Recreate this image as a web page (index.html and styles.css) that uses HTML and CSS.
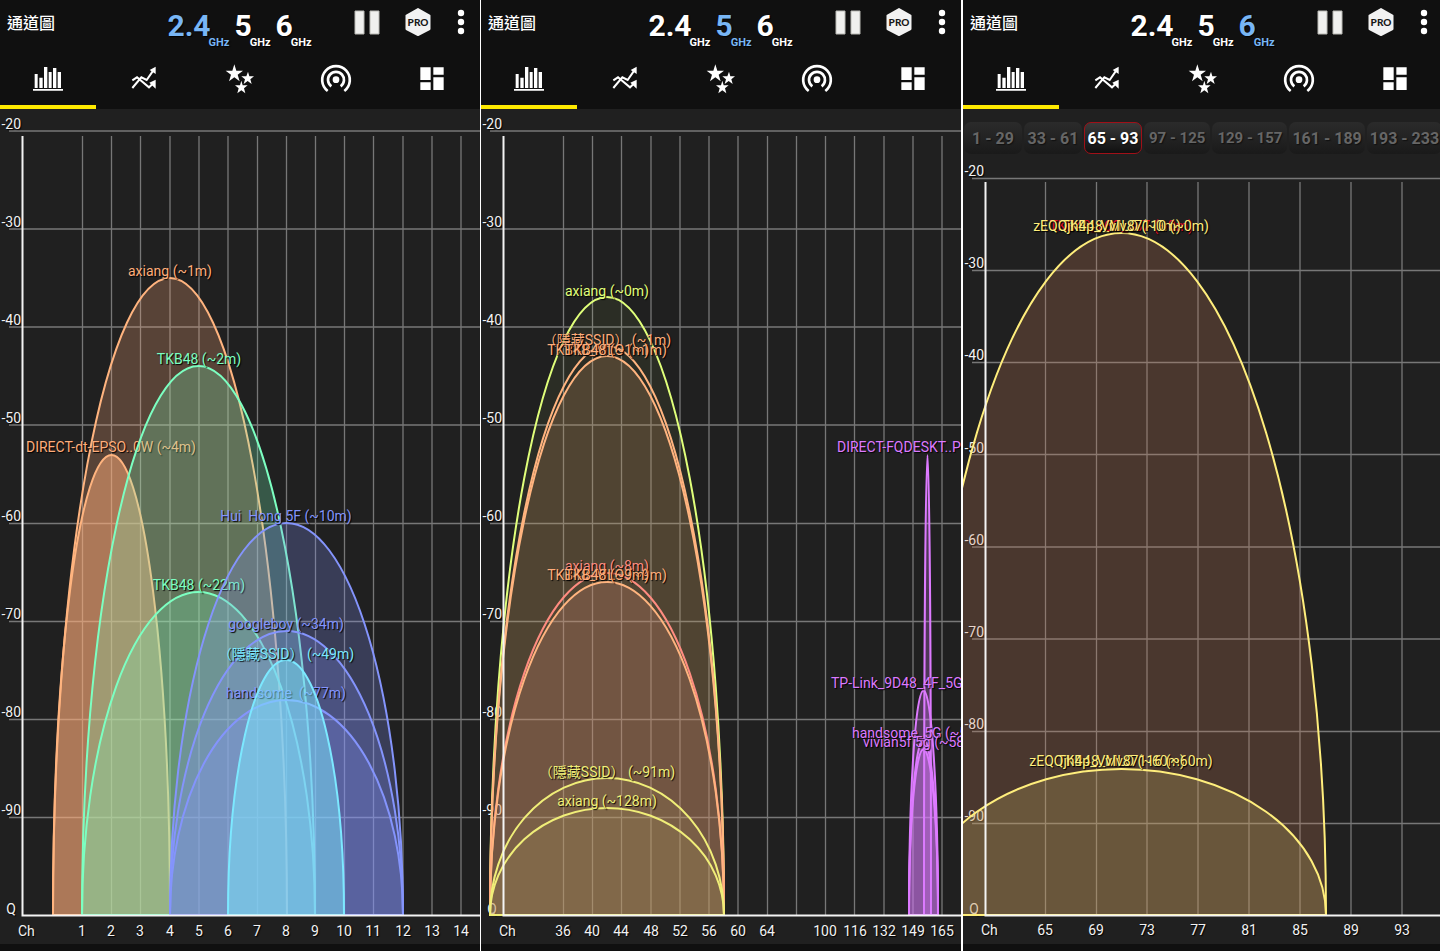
FILE: index.html
```html
<!DOCTYPE html>
<html lang="zh-Hant">
<head>
<meta charset="utf-8">
<title>通道圖</title>
<link rel="stylesheet" href="styles.css">
</head>
<body>
<svg class="defs" aria-hidden="true">
  <symbol id="i-pause" viewBox="0 0 28 28"><path d="M2 3h9v23h-9zM17 3h9v23h-9z" fill="#f0f0ee" stroke="#b9b9b4" stroke-width="1"/></symbol>
  <symbol id="i-pro" viewBox="0 0 28 28"><path d="M14 1 25.500 7.500v13.500L14 27 2.500 21V7.500z" fill="#f2f2f2" stroke="#f2f2f2" stroke-width="2" stroke-linejoin="round"/><text class="pro-text" x="14" y="18" text-anchor="middle">PRO</text></symbol>
  <symbol id="i-more" viewBox="0 0 12 28"><circle cx="6" cy="5" r="3.2"/><circle cx="6" cy="14" r="3.2"/><circle cx="6" cy="23" r="3.2"/></symbol>
  <symbol id="i-bars" viewBox="96 189 96 96"><path d="M104 222h9v42h-9zM118 233h10v31h-10zM132 201h10v63h-10zM146 216h9v48h-9zM159 204h10v60h-10zM173 216h10v48h-10zM99 267h90v5h-90z"/></symbol>
  <symbol id="i-trend" viewBox="384 189 96 96"><path d="M397 264 424 232 440 240 460 211M397 241 411 232 447 262 460 250" fill="none" stroke="#fff" stroke-width="6"/><path d="M467 200 467 222 449 210zM467 239 467 266 448 248z"/></symbol>
  <symbol id="i-stars" viewBox="672 189 96 96"><path d="M703 193 709 212 729 212 713 224 719 244 703 232 687 244 693 224 677 212 697 212z"/><path d="M744 215 748 229 762 229 751 238 755 252 743 243 731 252 735 238 724 229 739 229zM724 242 728 256 743 256 732 265 736 280 724 271 712 280 716 265 705 256 720 256z"/></symbol>
  <symbol id="i-radio" viewBox="960 189 96 96"><circle cx="1008" cy="239" r="10"/><path d="M983 273A41.500 41.500 0 1 1 1033 273M994 259A24 24 0 1 1 1022 259" fill="none" stroke="#fff" stroke-width="8"/></symbol>
  <symbol id="i-dash" viewBox="1248 189 96 96"><path d="M1261 202h31v38h-31zM1300 202h31v22h-31zM1261 247h31v23h-31zM1300 232h31v38h-31z"/></symbol>
</svg>

<main class="screens">
  <section class="screen">
    <div class="device">
      <header class="bar">
        <h1 class="title">通道圖</h1>
        <div class="bands">
          <button class="band is-on"><span class="num">2.4</span><span class="unit">GHz</span></button>
          <button class="band"><span class="num">5</span><span class="unit">GHz</span></button>
          <button class="band"><span class="num">6</span><span class="unit">GHz</span></button>
        </div>
        <div class="tools">
          <button class="tool" aria-label="暫停"><svg><use href="#i-pause"/></svg></button>
          <button class="tool" aria-label="PRO"><svg><use href="#i-pro"/></svg></button>
          <button class="tool more" aria-label="更多"><svg><use href="#i-more"/></svg></button>
        </div>
      </header>
      <nav class="tabs">
        <button class="tab is-on" aria-label="通道圖"><svg><use href="#i-bars"/></svg></button>
        <button class="tab" aria-label="時間圖"><svg><use href="#i-trend"/></svg></button>
        <button class="tab" aria-label="評級"><svg><use href="#i-stars"/></svg></button>
        <button class="tab" aria-label="訊號"><svg><use href="#i-radio"/></svg></button>
        <button class="tab" aria-label="列表"><svg><use href="#i-dash"/></svg></button>
      </nav>
      <svg class="chart" viewBox="0 109 480 835">
        <path class="grid" d="M9 131H480M9 229H480M9 327H480M9 425H480M9 523.500H480M9 621.500H480M9 719.500H480M9 817.500H480M82.500 136V915M111.500 136V915M140.500 136V915M170 136V915M199 136V915M228 136V915M257.500 136V915M286.500 136V915M315.500 136V915M344.500 136V915M373.500 136V915M403 136V915M432 136V915M461 136V915"/>
        <g class="lbl end"><text x="21" y="129">-20</text><text x="21" y="227">-30</text><text x="21" y="325">-40</text><text x="21" y="423">-50</text><text x="21" y="521">-60</text><text x="21" y="619">-70</text><text x="21" y="717">-80</text><text x="21" y="815">-90</text><text x="16" y="914">Q</text></g>
        <g class="lbl"><text x="18" y="936">Ch</text></g>
        <g class="lbl mid"><text x="82" y="936">1</text><text x="111" y="936">2</text><text x="140" y="936">3</text><text x="170" y="936">4</text><text x="199" y="936">5</text><text x="228" y="936">6</text><text x="257" y="936">7</text><text x="286" y="936">8</text><text x="315" y="936">9</text><text x="344" y="936">10</text><text x="373" y="936">11</text><text x="403" y="936">12</text><text x="432" y="936">13</text><text x="461" y="936">14</text></g>
        <g class="net orange"><path d="M53 915A117 637 0 0 1 287 915z"/><text x="170" y="276">axiang (~1m)</text></g>
        <g class="net orange narrow"><path d="M53 915A58.500 460 0 0 1 170 915z"/><text x="111" y="452">DIRECT-dt-EPSO..0W (~4m)</text></g>
        <g class="net green"><path d="M82 915A116.500 549 0 0 1 315 915z"/><text x="199" y="364">TKB48 (~2m)</text></g>
        <g class="net green"><path d="M82 915A116.500 323 0 0 1 315 915z"/><text x="199" y="590">TKB48 (~22m)</text></g>
        <g class="net blue"><path d="M170 915A116.500 392 0 0 1 403 915z"/><text x="286" y="521" xml:space="preserve">Hui  Hong 5F (~10m)</text></g>
        <g class="net blue"><path d="M170 915A116.500 284 0 0 1 403 915z"/><text x="286" y="629">googleboy (~34m)</text></g>
        <g class="net blue"><path d="M170 915A116.500 215 0 0 1 403 915z"/><text x="286" y="698" xml:space="preserve">handsome  (~77m)</text></g>
        <g class="net cyan narrow"><path d="M228 915A58 255 0 0 1 344 915z"/><text x="286" y="659">（隱藏SSID） (~49m)</text></g>
        <path class="axis" d="M22.500 136V915.500H480"/>
      </svg>
    </div>
  </section>

  <section class="screen">
    <div class="device">
      <header class="bar">
        <h1 class="title">通道圖</h1>
        <div class="bands">
          <button class="band"><span class="num">2.4</span><span class="unit">GHz</span></button>
          <button class="band is-on"><span class="num">5</span><span class="unit">GHz</span></button>
          <button class="band"><span class="num">6</span><span class="unit">GHz</span></button>
        </div>
        <div class="tools">
          <button class="tool" aria-label="暫停"><svg><use href="#i-pause"/></svg></button>
          <button class="tool" aria-label="PRO"><svg><use href="#i-pro"/></svg></button>
          <button class="tool more" aria-label="更多"><svg><use href="#i-more"/></svg></button>
        </div>
      </header>
      <nav class="tabs">
        <button class="tab is-on" aria-label="通道圖"><svg><use href="#i-bars"/></svg></button>
        <button class="tab" aria-label="時間圖"><svg><use href="#i-trend"/></svg></button>
        <button class="tab" aria-label="評級"><svg><use href="#i-stars"/></svg></button>
        <button class="tab" aria-label="訊號"><svg><use href="#i-radio"/></svg></button>
        <button class="tab" aria-label="列表"><svg><use href="#i-dash"/></svg></button>
      </nav>
      <svg class="chart" viewBox="481 109 480 835">
        <path class="grid" d="M490 131H961M490 229H961M490 327H961M490 425H961M490 523.500H961M490 621.500H961M490 719.500H961M490 817.500H961M563.500 136V915M592.500 136V915M621.500 136V915M651 136V915M680 136V915M709 136V915M738 136V915M767.500 136V915M796.500 136V915M825.500 136V915M854.500 136V915M884 136V915M913 136V915M942 136V915"/>
        <g class="lbl end"><text x="502" y="129">-20</text><text x="502" y="227">-30</text><text x="502" y="325">-40</text><text x="502" y="423">-50</text><text x="502" y="521">-60</text><text x="502" y="619">-70</text><text x="502" y="717">-80</text><text x="502" y="815">-90</text><text x="497" y="914">Q</text></g>
        <g class="lbl"><text x="499" y="936">Ch</text></g>
        <g class="lbl mid"><text x="563" y="936">36</text><text x="592" y="936">40</text><text x="621" y="936">44</text><text x="651" y="936">48</text><text x="680" y="936">52</text><text x="709" y="936">56</text><text x="738" y="936">60</text><text x="767" y="936">64</text><text x="825" y="936">100</text><text x="855" y="936">116</text><text x="884" y="936">132</text><text x="913" y="936">149</text><text x="942" y="936">165</text></g>
        <g class="net lime"><path d="M490 915A117 618 0 0 1 724 915z"/><text x="607" y="296">axiang (~0m)</text></g>
        <g class="net orange line"><path d="M490 915A117 569 0 0 1 724 915z"/><text x="607" y="345">（隱藏SSID） (~1m)</text></g>
        <g class="net orange"><path class="tan" d="M490 915A117 559 0 0 1 724 915z"/><text x="607" y="355">TKB48_MLO (~1m)</text><text x="607" y="355">TKB48 (~1m)</text></g>
        <g class="net pink line"><path d="M490 915A117 342 0 0 1 724 915z"/><text x="607" y="571">axiang (~8m)</text></g>
        <g class="net orange"><path class="rose" d="M490 915A117 333 0 0 1 724 915z"/><text x="607" y="580">TKB48_MLO (~9m)</text><text x="607" y="580">TKB48 (~9m)</text></g>
        <g class="net yellow half"><path d="M490 915A117 137 0 0 1 724 915z"/><text x="607" y="777">（隱藏SSID） (~91m)</text></g>
        <g class="net yellow half"><path d="M490 915A117 107 0 0 1 724 915z"/><text x="607" y="806">axiang (~128m)</text></g>
        <g class="net purple"><path d="M924 915A3.500 460 0 0 1 931 915z"/><text class="start" x="837" y="452">DIRECT-FQDESKT..PI (~4m)</text></g>
        <g class="net purple"><path d="M909 915A14.500 225 0 0 1 938 915z"/><text class="start" x="831" y="688">TP-Link_9D48_4F_5G (~58m)</text></g>
        <g class="net purple"><path d="M909 915A14.500 176 0 0 1 938 915z"/><text class="start" x="852" y="738">handsome_5G (~58m)</text></g>
        <g class="net purple"><path d="M909 915A14.500 166 0 0 1 938 915z"/><text class="start" x="863" y="747">vivian5f 5g (~58m)</text></g>
        <path class="axis" d="M503.500 136V915.500H961"/>
      </svg>
    </div>
  </section>

  <section class="screen">
    <div class="device cropped">
      <header class="bar">
        <h1 class="title">通道圖</h1>
        <div class="bands">
          <button class="band"><span class="num">2.4</span><span class="unit">GHz</span></button>
          <button class="band"><span class="num">5</span><span class="unit">GHz</span></button>
          <button class="band is-on"><span class="num">6</span><span class="unit">GHz</span></button>
        </div>
        <div class="tools">
          <button class="tool" aria-label="暫停"><svg><use href="#i-pause"/></svg></button>
          <button class="tool" aria-label="PRO"><svg><use href="#i-pro"/></svg></button>
          <button class="tool more" aria-label="更多"><svg><use href="#i-more"/></svg></button>
        </div>
      </header>
      <nav class="tabs">
        <button class="tab is-on" aria-label="通道圖"><svg><use href="#i-bars"/></svg></button>
        <button class="tab" aria-label="時間圖"><svg><use href="#i-trend"/></svg></button>
        <button class="tab" aria-label="評級"><svg><use href="#i-stars"/></svg></button>
        <button class="tab" aria-label="訊號"><svg><use href="#i-radio"/></svg></button>
        <button class="tab" aria-label="列表"><svg><use href="#i-dash"/></svg></button>
      </nav>
      <div class="ranges">
        <button class="range">1 - 29</button>
        <button class="range">33 - 61</button>
        <button class="range is-on">65 - 93</button>
        <button class="range small">97 - 125</button>
        <button class="range small">129 - 157</button>
        <button class="range">161 - 189</button>
        <button class="range">193 - 233</button>
      </div>
      <svg class="chart" viewBox="963 159 480 785">
        <path class="grid" d="M972 178.500H1443M972 270.500H1443M972 362.500H1443M972 454.500H1443M972 547H1443M972 639H1443M972 731.500H1443M972 823.500H1443M1045.500 182V915M1096.500 182V915M1147 182V915M1198 182V915M1249 182V915M1300 182V915M1351 182V915M1402 182V915"/>
        <g class="lbl end"><text x="984" y="176">-20</text><text x="984" y="268">-30</text><text x="984" y="360">-40</text><text x="984" y="453">-50</text><text x="984" y="545">-60</text><text x="984" y="637">-70</text><text x="984" y="729">-80</text><text x="984" y="821">-90</text><text x="979" y="914">Q</text></g>
        <g class="lbl"><text x="981" y="935">Ch</text></g>
        <g class="lbl mid"><text x="1045" y="935">65</text><text x="1096" y="935">69</text><text x="1147" y="935">73</text><text x="1198" y="935">77</text><text x="1249" y="935">81</text><text x="1300" y="935">85</text><text x="1351" y="935">89</text><text x="1402" y="935">93</text></g>
        <g class="net gold"><path class="brown" d="M917 915A204.500 682 0 0 1 1326 915z"/><text class="red" x="1121" y="231">TKB48_v6G_v87 (~0m)</text><text x="1121" y="231">TKB48_MLO (~0m)</text><text x="1121" y="231">zEQQjh4p_VvIv87110 (~0m)</text></g>
        <g class="net gold"><path class="olive" d="M917 915A204.500 146 0 0 1 1326 915z"/><text x="1121" y="766">TKB48_MLO (~60m)</text><text x="1121" y="766">zEQQjh4p_VvIv87116 (~60m)</text></g>
        <path class="axis" d="M985.500 182V915.500H1443"/>
      </svg>
    </div>
  </section>
</main>
</body>
</html>
```
FILE: styles.css
```css
* { box-sizing: border-box; }

body {
  margin: 0;
  background: #101010;
  color: #fff;
  font-family: Roboto, "Noto Sans CJK TC", sans-serif;
}

button {
  margin: 0;
  padding: 0;
  border: 0;
  background: none;
  color: inherit;
  font: inherit;
  cursor: pointer;
}

.defs { position: absolute; width: 0; height: 0; }

.screens {
  display: grid;
  grid-template-columns: 480fr 481fr 479fr;
  min-height: 100vh;
}

.screen { min-width: 0; overflow: hidden; background: #101010; }
.screen + .screen { border-left: 1px solid #fff; }
.screen + .screen + .screen { border-left-width: 2px; }

/* the last screen runs slightly past the right edge */
.cropped { width: calc(100% + 3px); }

.bar {
  display: grid;
  grid-template-columns: 35% 1fr auto;
  height: 49px;
  padding-right: 13px;
}

.title {
  margin: 0;
  padding: 12px 0 0 7px;
  font-size: 16px;
  font-weight: 500;
  line-height: 24px;
}

.bands { display: flex; gap: 5px; align-items: flex-start; padding-left: 4px; }
.band { display: flex; align-items: flex-end; font-weight: 700; text-shadow: 1px 1px 1px #000; }
.num { font-size: 30px; line-height: 32px; padding: 10px 0 8px; }
.unit { margin-left: -2px; font-size: 11px; line-height: 14px; }
.band.is-on { color: #78b6f5; }

.tools { display: flex; gap: 23px; padding-top: 8px; }
.tool { width: 28px; height: 28px; }
.tool.more { width: 12px; }
.tool svg { display: block; width: 100%; height: 100%; fill: #fff; }
.pro-text { font: 900 10px Lato, sans-serif; fill: #181818; }

.tabs { display: grid; grid-template-columns: repeat(5, 1fr); height: 60px; }
.tab { display: grid; justify-items: center; padding-top: 14px; border-bottom: 4px solid transparent; }
.tab.is-on { border-color: #ffea00; }
.tab svg { width: 32px; height: 32px; fill: #fff; }

.ranges {
  display: flex;
  gap: 2px;
  padding: 13px 0 5px 1px;
  background: #202020;
}
.range {
  flex: none;
  min-width: 58px;
  height: 32px;
  padding: 0 2px;
  border: 1px solid transparent;
  border-radius: 7px;
  background: linear-gradient(#2b2b2b, #1a1a1a) border-box;
  color: #666;
  font-size: 16px;
  font-weight: 700;
  text-shadow: 1px 1px 1px #111;
  white-space: nowrap;
}
.range.small { padding: 0 4px; font-size: 15px; }
.range.is-on {
  border-color: #a01018;
  background: linear-gradient(#3a3a3a, #101010);
  color: #fff;
}

.chart { display: block; width: 100%; height: auto; background: #202020; }
.chart text { font-size: 14px; text-shadow: 1px 1px 1px #000; }
.grid { fill: none; stroke: #777; stroke-width: 1.3; }
.axis { fill: none; stroke: #f4f4f4; stroke-width: 2; }
.lbl { fill: #f2f2f2; }
.end { text-anchor: end; }
.mid { text-anchor: middle; }

.net { text-anchor: middle; }
.net path { stroke-width: 2; fill-opacity: .25; }
.net .start { text-anchor: start; }
.net.narrow path { fill-opacity: .5; }
.net.half path { fill: #b4b060; fill-opacity: .12; }
.orange { fill: #ffad7a; stroke: #ffb47f; }
.green { fill: #7cffc1; stroke: #7cffc1; }
.blue { fill: #8494fc; stroke: #8494fc; }
.cyan { fill: #7ce8ff; stroke: #7ce8ff; }
.lime { fill: #e0ff7a; stroke: #e0ff7a; }
.net.lime path { fill-opacity: .06; }
.pink { fill: #ff8c80; stroke: #ff8c80; }
.yellow { fill: #f0ee78; stroke: #f0ee78; }
.purple { fill: #dd7aff; stroke: #dd7aff; }
.gold { fill: #ffee7c; stroke: #ffee7c; }
.net text { stroke: none; }
.net.line path { fill-opacity: 0; }
.net .tan { fill: #bf8d5c; }
.net .rose { fill: #d88975; }
.net .brown { fill: #c87c58; }
.net .olive { fill: #c6b362; }
.net .red { fill: #e0102c; }
```
